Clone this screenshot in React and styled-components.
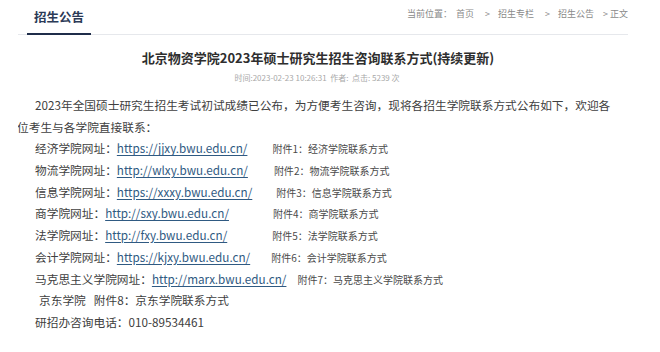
import React from "react";
import styled, { createGlobalStyle } from "styled-components";

const GlobalStyle = createGlobalStyle`
  body {
    margin: 0;
    background: #fff;
    font-family: "Noto Sans CJK SC", "Noto Sans", sans-serif;
  }
`;

const Page = styled.div`
  width: 610px;
  margin-left: 18px;
  height: 352px;
  overflow: hidden;
`;

const TopBar = styled.div`
  display: flex;
  align-items: flex-end;
  justify-content: space-between;
  height: 34px;
  border-bottom: 1px solid #e6e8ec;
`;

const Tab = styled.div`
  margin-left: 9px;
  padding: 0 7px 8px;
  font-size: 12.5px;
  font-weight: 700;
  color: #2b3a57;
  line-height: 16px;
  border-bottom: 2px solid #1f2d4a;
  margin-bottom: -1px;
`;

const Crumbs = styled.div`
  display: flex;
  align-items: center;
  padding-bottom: 14px;
  font-size: 9px;
  line-height: 12px;
  color: #8a8a8a;
`;

const Crumb = styled.span`
  margin-left: ${(p) => p.gap || 0}px;
`;

const Title = styled.h1`
  margin: 13px 0 0;
  text-align: center;
  font-size: 13px;
  line-height: 20px;
  font-weight: 700;
  color: #2e2e2e;
  padding-right: 10px;
`;

const Meta = styled.div`
  margin-top: 4px;
  text-align: center;
  font-size: 8px;
  line-height: 12px;
  color: #a8a8a8;
  padding-right: 12px;
`;

const Body = styled.div`
  margin-top: 10px;
  font-size: 11.7px;
  line-height: 21.7px;
  color: #404040;
  margin-left: -1px;
`;

const Para = styled.p`
  margin: 0;
  padding-right: 8px;
  text-indent: 18px;
`;

const Row = styled.div`
  height: 21.7px;
  padding-left: ${(p) => p.indent || 18}px;
  white-space: nowrap;
`;

const Link = styled.a`
  color: #2f5a82;
  text-decoration: underline;
  text-underline-offset: 2px;
`;

const Attach = styled.span`
  display: inline-block;
  margin-left: ${(p) => p.gap}px;
  font-size: 10px;
  line-height: 10px;
  color: #4a4a4a;
`;

const Plain = styled.span`
  margin-left: ${(p) => p.gap || 0}px;
`;

const sites = [
  { label: "经济学院网址：", url: "https://jjxy.bwu.edu.cn/", n: 1, name: "经济学院", gap: 25 },
  { label: "物流学院网址：", url: "http://wlxy.bwu.edu.cn/", n: 2, name: "物流学院", gap: 26 },
  { label: "信息学院网址：", url: "https://xxxy.bwu.edu.cn/", n: 3, name: "信息学院", gap: 24 },
  { label: "商学院网址：", url: "http://sxy.bwu.edu.cn/", n: 4, name: "商学院", gap: 44 },
  { label: "法学院网址：", url: "http://fxy.bwu.edu.cn/", n: 5, name: "法学院", gap: 45 },
  { label: "会计学院网址：", url: "https://kjxy.bwu.edu.cn/", n: 6, name: "会计学院", gap: 21 },
  { label: "马克思主义学院网址：", url: "http://marx.bwu.edu.cn/", n: 7, name: "马克思主义学院", gap: 11 },
];

export default function App() {
  return (
    <>
      <GlobalStyle />
      <Page>
        <TopBar>
          <Tab>招生公告</Tab>
          <Crumbs>
            <Crumb>当前位置：</Crumb>
            <Crumb gap={4}>首页</Crumb>
            <Crumb gap={11}>&gt;</Crumb>
            <Crumb gap={8}>招生专栏</Crumb>
            <Crumb gap={11}>&gt;</Crumb>
            <Crumb gap={8}>招生公告</Crumb>
            <Crumb gap={9}>&gt; 正文</Crumb>
          </Crumbs>
        </TopBar>
        <Title>北京物资学院2023年硕士研究生招生咨询联系方式(持续更新)</Title>
        <Meta>时间:2023-02-23 10:26:31&nbsp;&nbsp;作者:&nbsp;&nbsp;点击: 5239 次</Meta>
        <Body>
          <Para>
            2023年全国硕士研究生招生考试初试成绩已公布，为方便考生咨询，现将各招生学院联系方式公布如下，欢迎各位考生与各学院直接联系：
          </Para>
          {sites.map((s) => (
            <Row key={s.n}>
              <span>{s.label}</span>
              <Link href="#">{s.url}</Link>
              <Attach gap={s.gap}>
                附件{s.n}：{s.name}联系方式
              </Attach>
            </Row>
          ))}
          <Row indent={22}>
            <span>京东学院</span>
            <Plain gap={8}>附件8：京东学院联系方式</Plain>
          </Row>
          <Row>研招办咨询电话：010-89534461</Row>
        </Body>
      </Page>
    </>
  );
}
